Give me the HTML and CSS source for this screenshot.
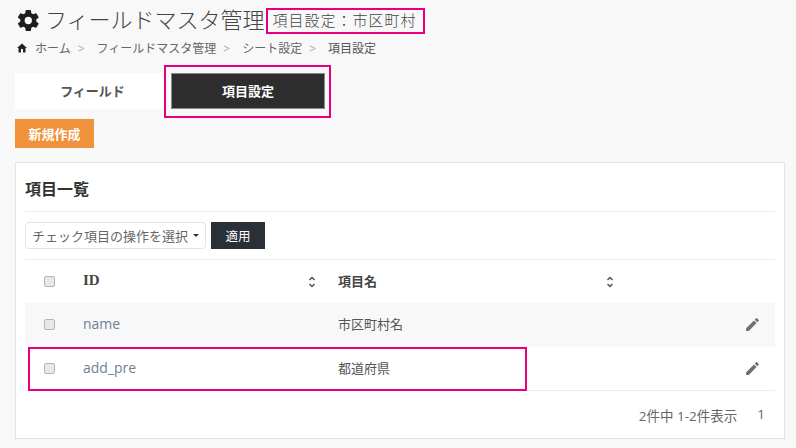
FILE: index.html
```html
<!DOCTYPE html>
<html lang="ja">
<head>
  <meta charset="UTF-8">
  <title>フィールドマスタ管理</title>
  <link rel="stylesheet" href="styles.css">
</head>
<body>
  <div class="page">
    <div class="title-row">
      <svg class="gear" viewBox="0 0 24 24"><path d="M19.4 13c.04-.33.06-.66.06-1s-.02-.67-.07-1l2.16-1.65c.2-.15.25-.42.12-.64l-2.05-3.5a.5.5 0 0 0-.62-.22l-2.55 1a7.500 7.500 0 0 0-1.73-1L14.340 2.400A.5.5 0 0 0 13.840 2H9.760a.5.5 0 0 0-.5.42l-.38 2.600c-.62.26-1.200.6-1.730 1l-2.550-1a.5.5 0 0 0-.62.22l-2.040 3.500c-.13.22-.08.49.12.64L4.220 11c-.05.33-.08.67-.08 1s.03.67.08 1l-2.160 1.650c-.2.15-.25.42-.12.64l2.040 3.500c.13.22.39.3.62.22l2.550-1c.53.4 1.110.74 1.730 1l.38 2.570c.04.24.25.42.5.42h4.080c.25 0 .46-.18.5-.42l.38-2.570c.62-.26 1.200-.6 1.730-1l2.550 1c.23.08.49 0 .62-.22l2.050-3.500c.13-.22.08-.49-.12-.64zM11.800 15.500a3.500 3.500 0 1 1 0-7 3.500 3.500 0 0 1 0 7z"/></svg>
      <h1>フィールドマスタ管理</h1>
      <span class="subtitle">項目設定：市区町村</span>
    </div>

    <div class="breadcrumb">
      <svg class="home" viewBox="0 0 24 24"><path d="M10 21v-7h4v7h5v-9h3L12 3 2 12h3v9z"/></svg>
      <a class="crumb">ホーム</a><span class="sep">&gt;</span>
      <a class="crumb">フィールドマスタ管理</a><span class="sep">&gt;</span>
      <a class="crumb">シート設定</a><span class="sep">&gt;</span>
      <span class="crumb current">項目設定</span>
    </div>

    <div class="tabs">
      <a class="tab">フィールド</a>
      <a class="tab active">項目設定</a>
    </div>

    <button class="btn-new">新規作成</button>

    <div class="panel">
      <h2>項目一覧</h2>
      <div class="bulk">
        <div class="select">チェック項目の操作を選択<span class="caret"></span></div>
        <button class="btn-apply">適用</button>
      </div>
      <table>
        <thead>
          <tr>
            <th class="col-check"><span class="check"></span></th>
            <th class="col-id">ID<svg class="sort" viewBox="0 0 8 12"><path d="M1.500 4 4 1.500 6.500 4M1.500 8 4 10.500 6.500 8"/></svg></th>
            <th class="col-name">項目名<svg class="sort" viewBox="0 0 8 12"><path d="M1.500 4 4 1.500 6.500 4M1.500 8 4 10.500 6.500 8"/></svg></th>
            <th class="col-edit"></th>
          </tr>
        </thead>
        <tbody>
          <tr class="stripe">
            <td class="col-check"><span class="check"></span></td>
            <td class="cell-id">name</td>
            <td class="cell-name">市区町村名</td>
            <td class="col-edit"><svg class="pencil" viewBox="0 0 24 24"><path d="M3 17.250V21h3.750L17.810 9.940l-3.750-3.750zM20.710 7.040a1 1 0 0 0 0-1.410l-2.340-2.340a1 1 0 0 0-1.410 0l-1.830 1.830 3.750 3.750z"/></svg></td>
          </tr>
          <tr>
            <td class="col-check"><span class="check"></span></td>
            <td class="cell-id">add_pre</td>
            <td class="cell-name">都道府県</td>
            <td class="col-edit"><svg class="pencil" viewBox="0 0 24 24"><path d="M3 17.250V21h3.750L17.810 9.940l-3.750-3.750zM20.710 7.040a1 1 0 0 0 0-1.410l-2.340-2.340a1 1 0 0 0-1.410 0l-1.830 1.830 3.750 3.750z"/></svg></td>
          </tr>
        </tbody>
      </table>
      <div class="table-foot">
        <span>2件中 1-2件表示</span>
        <span class="page-num">1</span>
      </div>
    </div>
  </div>

  <div class="mark mark-title"></div>
  <div class="mark mark-tab"></div>
  <div class="mark mark-row"></div>
</body>
</html>
```

FILE: styles.css
```css
body {
  font-family: "Open Sans", "Noto Sans CJK JP", sans-serif;
  background-color: #f8f8f8;
  color: #555;
  margin: 0;
  padding: 0;
  overflow: hidden;
}

.page {
  padding: 0 11px 0 15px;
}

.title-row {
  display: flex;
  align-items: center;
  height: 38px;
}

.gear {
  width: 25px;
  height: 25px;
  margin: 3px 4px 0 1px;
  fill: #1d1d1d;
}

h1 {
  margin: 0;
  font-size: 22px;
  font-weight: 300;
  line-height: 38px;
  color: #444;
}

.subtitle {
  margin-left: 8px;
  font-size: 15px;
  letter-spacing: 1px;
  font-weight: 300;
  color: #444;
}

.breadcrumb {
  display: flex;
  align-items: center;
  height: 20px;
  font-size: 12px;
  padding-left: 1px;
}

.home {
  width: 12px;
  height: 12px;
  margin-right: 7px;
  fill: #222;
}

.crumb {
  color: #666;
}

.current {
  color: #555;
}

.sep {
  margin: 0 12px 0 7px;
  color: #aaa;
}

.tabs {
  display: flex;
  margin-top: 15px;
}

.tab {
  display: block;
  box-sizing: border-box;
  width: 149px;
  height: 36px;
  padding-left: 6px;
  line-height: 36px;
  text-align: center;
  font-size: 13px;
  font-weight: 700;
  color: #555;
  background-color: #fff;
}

.tab.active {
  width: 154px;
  margin-left: 7px;
  padding-left: 0;
  color: #fff;
  background-color: #2d2d2d;
  border: 1px solid #888;
  line-height: 34px;
}

.btn-new {
  display: block;
  width: 79px;
  height: 29px;
  margin-top: 10px;
  padding: 0;
  border: none;
  font-family: inherit;
  font-size: 13px;
  font-weight: 700;
  color: #fff;
  background-color: #f0923b;
}

.panel {
  margin-top: 14px;
  height: 275px;
  padding: 0 9px;
  background-color: #fff;
  border: 1px solid #e3e3e3;
}

h2 {
  margin: 0;
  height: 48px;
  line-height: 53px;
  font-size: 16px;
  font-weight: 700;
  color: #333;
  border-bottom: 1px solid #eee;
}

.bulk {
  display: flex;
  gap: 5px;
  height: 48px;
  padding-top: 10px;
  box-sizing: border-box;
  border-bottom: 1px solid #eee;
}

.select {
  display: flex;
  align-items: center;
  box-sizing: border-box;
  width: 181px;
  height: 27px;
  padding-left: 6px;
  font-size: 13px;
  color: #666;
  border: 1px solid #e3e3e3;
  border-radius: 4px;
}

.caret {
  margin-left: 5px;
  border-top: 3px solid #333;
  border-left: 3px solid transparent;
  border-right: 3px solid transparent;
}

.btn-apply {
  width: 54px;
  height: 27px;
  padding: 0;
  border: none;
  font-family: inherit;
  font-size: 12.500px;
  color: #fff;
  background-color: #2a3038;
}

table {
  width: 100%;
  border-collapse: collapse;
  table-layout: fixed;
  font-size: 13px;
}

th, td {
  padding: 0;
  text-align: left;
}

thead tr {
  height: 43px;
}

tbody tr {
  height: 43.500px;
}

tbody tr:last-child {
  border-bottom: 1px solid #eee;
}

th {
  font-family: "Liberation Serif", "Noto Sans CJK JP", serif;
  font-size: 15px;
  font-weight: 700;
  color: #444;
  position: relative;
}

.stripe {
  background-color: #f8f8f8;
}

.col-check {
  width: 39px;
  padding-left: 19px;
  box-sizing: content-box;
}

.col-id {
  width: 255px;
  padding-bottom: 2px;
}

.col-name {
  width: 300px;
  padding-bottom: 3px;
  font-family: "Noto Sans CJK JP", sans-serif;
  font-size: 13px;
}

.col-edit {
  text-align: right;
  padding-right: 14px;
}

.cell-id {
  padding-bottom: 2px;
  color: #6f7f96;
  font-size: 14px;
}

.cell-name {
  padding-bottom: 2px;
}

.check {
  display: block;
  box-sizing: border-box;
  width: 11px;
  height: 11px;
  background-color: #e8e8e8;
  border: 1px solid #b5b5b5;
  border-radius: 2px;
}

.sort {
  position: absolute;
  top: 16px;
  right: 22px;
  width: 8px;
  height: 12px;
  fill: none;
  stroke: #555;
  stroke-width: 1.500;
}

.col-name .sort {
  right: 24px;
}

.pencil {
  display: block;
  width: 17px;
  height: 17px;
  margin-left: auto;
  fill: #707070;
}

.table-foot {
  display: flex;
  justify-content: flex-end;
  gap: 20px;
  padding: 14px 10px 0 0;
  font-size: 13.500px;
  color: #666;
}

/* annotation frames drawn over the screenshot */
.mark {
  position: absolute;
  box-sizing: border-box;
  border: 2px solid #e6007e;
}

.mark-title {
  left: 266px;
  top: 8px;
  width: 159px;
  height: 26px;
}

.mark-tab {
  left: 164px;
  top: 65px;
  width: 167px;
  height: 53px;
}

.mark-row {
  left: 28px;
  top: 347px;
  width: 499px;
  height: 44px;
}
```
